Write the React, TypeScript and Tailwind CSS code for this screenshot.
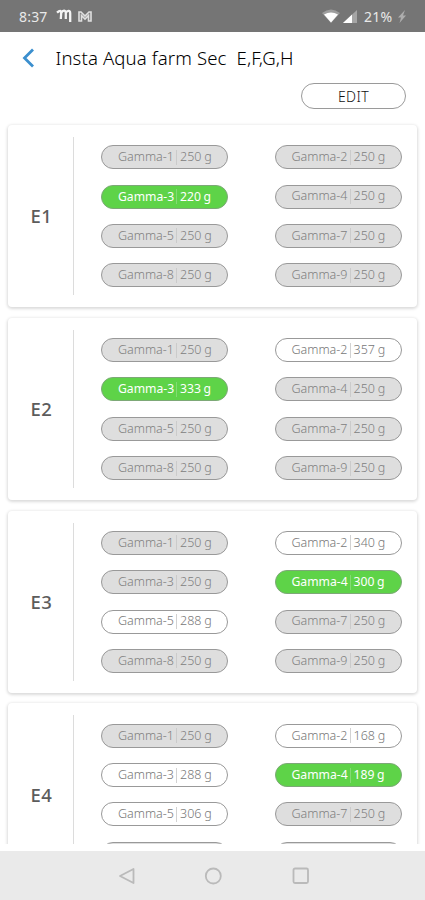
type Status = 'idle' | 'active' | 'open';

type Slot = {
  name: string;
  weight: number;
  status: Status;
};

type Tank = {
  id: string;
  slots: Slot[];
};

const NAMES = [1, 2, 3, 4, 5, 7, 8, 9];

function tank(id: string, changes: Record<number, [number, Status]>): Tank {
  return {
    id,
    slots: NAMES.map((n) => ({
      name: `Gamma-${n}`,
      weight: changes[n] ? changes[n][0] : 250,
      status: changes[n] ? changes[n][1] : 'idle',
    })),
  };
}

const tanks: Tank[] = [
  tank('E1', { 3: [220, 'active'] }),
  tank('E2', { 2: [357, 'open'], 3: [333, 'active'] }),
  tank('E3', { 2: [340, 'open'], 4: [300, 'active'], 5: [288, 'open'] }),
  tank('E4', { 2: [168, 'open'], 3: [288, 'open'], 4: [189, 'active'], 5: [306, 'open'] }),
];

const pillStyles: Record<Status, string> = {
  idle: 'bg-[#dedede] text-[#808080] border-[#999999] text-[12.5px] font-light',
  active: 'bg-[#5ed348] text-white border-[#7da877] text-[12.2px]',
  open: 'bg-white text-[#777777] border-[#999999] text-[12.5px] font-light',
};

const dividerStyles: Record<Status, string> = {
  idle: 'bg-[#cbcbcb]',
  active: 'bg-[#83db73]',
  open: 'bg-[#d2d2d2]',
};

export default function App() {
  return (
    <div className="flex h-[900px] w-[425px] flex-col overflow-hidden bg-white font-['Noto_Sans',sans-serif]">
      <StatusBar />
      <header className="h-[87px] shrink-0">
        <div className="flex h-[52px] items-center pl-[22px]">
          <svg className="h-[20px] w-[13px]" viewBox="0 0 13 20" fill="none" stroke="#3b8fce" strokeWidth="2.8">
            <path d="M11 1.5 2.5 10 11 18.5" />
          </svg>
          <h1 className="ml-[20.5px] text-[18.6px] leading-none font-light tracking-[0.12px] whitespace-pre text-black">
            Insta Aqua farm Sec  E,<span className="tracking-[-0.8px]">F,</span>G,H
          </h1>
        </div>
        <button className="mt-[-1px] ml-[301px] flex h-[26px] w-[105px] items-center justify-center rounded-full border border-[#9a9a9a] pt-px text-[14px] font-light tracking-[0.4px] text-[#111111]">
          EDIT
        </button>
      </header>
      <main className="flex h-[725px] shrink-0 flex-col gap-[10.8px] overflow-hidden px-[8px] pt-[6px]">
        {tanks.map((t) => (
          <TankCard key={t.id} tank={t} />
        ))}
      </main>
      <NavBar />
    </div>
  );
}

function TankCard({ tank }: { tank: Tank }) {
  return (
    <section className="flex h-[182px] shrink-0 rounded-[4px] bg-white py-[12px] shadow-[0_1px_3px_1px_rgba(0,0,0,0.14)]">
      <div className="flex w-[66px] items-center justify-center border-r border-[#dcdcdc] pl-[2px] text-[18.5px] tracking-[0.5px] text-[#5c5c5c]">
        <span className="font-medium">{tank.id}</span>
      </div>
      <div className="ml-[27px] grid grid-cols-[127px_127px] content-start gap-x-[46.5px] gap-y-[15.3px] pt-[8.4px]">
        {tank.slots.map((s) => (
          <Pill key={s.name} slot={s} />
        ))}
      </div>
    </section>
  );
}

function Pill({ slot }: { slot: Slot }) {
  return (
    <div className={`flex h-[24px] items-center rounded-full border pl-[16px] leading-none ${pillStyles[slot.status]}`}>
      <span className="w-[58px] whitespace-nowrap">{slot.name}</span>
      <span className={`h-[15px] w-px shrink-0 ${dividerStyles[slot.status]}`} />
      <span className="ml-[3px] whitespace-nowrap [word-spacing:-0.5px]">{slot.weight} g</span>
    </div>
  );
}

function StatusBar() {
  return (
    <div className="flex h-[32px] shrink-0 items-center bg-[#757575] pl-[19px] text-[14px] leading-none text-[#e9e9e9]">
      <span className="w-[37px] pt-px tracking-[0.2px]">8:37</span>
      <svg className="h-[14px] w-[16px]" viewBox="0 0 16 14" fill="none" stroke="#f4f4f4" strokeWidth="2.3">
        <path d="M1 3.6C4 .8 5.3 1.5 5.2 4L4.8 10M5.2 4C6.5 1 9.8.8 9.8 4v6M9.8 4c1.5-3 4.4-2.6 4.4.3V13" />
      </svg>
      <svg className="ml-[6px] h-[11px] w-[14px]" viewBox="0 0 14 11" fill="none" stroke="#e0e0e0" strokeWidth="1.6">
        <path d="M1 1h2l4 4 4-4h2v9h-2.5V4.5L7 8 3.500 4.500V10H1z" />
      </svg>
      <svg className="ml-[230px] h-[14px] w-[18px]" viewBox="0 0 18 14" fill="#ffffff">
        <path d="M0 4Q9-3 18 4L9 14z" opacity=".3" />
        <path d="M2 5.500Q9 1.500 16 5.500L9 13.500z" />
      </svg>
      <svg className="ml-[3px] h-[13px] w-[14px]" viewBox="0 0 14 13" fill="#ffffff">
        <path d="M14 0v13H0z" opacity=".35" />
        <path d="M9 4.500V13H0z" />
      </svg>
      <span className="ml-[7px] pt-px tracking-[0.2px]">21%</span>
      <svg className="ml-[6px] h-[13px] w-[8px]" viewBox="0 0 8 13" fill="#adadad">
        <path d="M7 0 0 7.500h3L1.500 13 8 5.500H5z" />
      </svg>
    </div>
  );
}

function NavBar() {
  return (
    <nav className="mt-[7px] flex h-[49px] shrink-0 items-center bg-[#eaeaea] pl-[118px]">
      <svg className="h-[18px] w-[192px]" viewBox="0 0 192 18" fill="none" stroke="#bababa" strokeWidth="1.8" strokeLinejoin="round">
        <path d="M15.500 2v14L2 9z" />
        <circle cx="95.300" cy="9" r="7.500" />
        <rect x="175.500" y="1.500" width="14.500" height="14.500" rx="1.500" />
      </svg>
    </nav>
  );
}
